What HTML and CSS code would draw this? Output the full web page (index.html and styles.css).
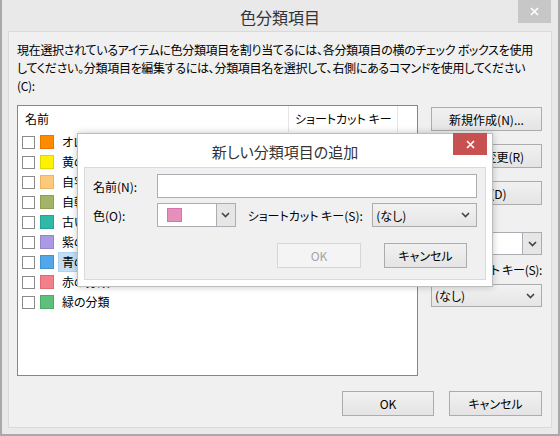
FILE: index.html
```html
<!DOCTYPE html>
<html lang="ja">
<head>
  <meta charset="UTF-8">
  <title>色分類項目</title>
  <link rel="stylesheet" href="styles.css">
</head>
<body>

  <div class="window">
    <div class="titlebar">
      <span class="title">色分類項目</span>
      <button class="close-btn" aria-label="閉じる">
        <svg width="9" height="9" viewBox="0 0 9 9"><path d="M1 1 L8 8 M8 1 L1 8" stroke="#fff" stroke-width="1.6" fill="none"/></svg>
      </button>
    </div>

    <div class="client">
      <p class="intro">
        <span>現在選択されているアイテムに色分類項目を割り当てるには、各分類項目の横のチェック ボックスを使用</span>
        <span>してください。分類項目を編集するには、分類項目名を選択して、右側にあるコマンドを使用してください</span>
        <span>(C):</span>
      </p>

      <div class="main">
        <div class="listbox">
          <div class="list-head">
            <div class="col-name">名前</div>
            <div class="col-key">ショートカット キー</div>
          </div>
          <ul class="list">
            <li><span class="check"></span><span class="swatch sw-orange"></span><span class="name">オレンジの分類</span></li>
            <li><span class="check"></span><span class="swatch sw-yellow"></span><span class="name">黄の分類</span></li>
            <li><span class="check"></span><span class="swatch sw-peach"></span><span class="name">自宅</span></li>
            <li><span class="check"></span><span class="swatch sw-olive"></span><span class="name">自転車</span></li>
            <li><span class="check"></span><span class="swatch sw-teal"></span><span class="name">古い項目</span></li>
            <li><span class="check"></span><span class="swatch sw-purple"></span><span class="name">紫の分類</span></li>
            <li><span class="check"></span><span class="swatch sw-blue"></span><span class="name selected">青の分類</span></li>
            <li><span class="check"></span><span class="swatch sw-red"></span><span class="name">赤の分類</span></li>
            <li><span class="check"></span><span class="swatch sw-green"></span><span class="name">緑の分類</span></li>
          </ul>
        </div>

        <div class="side">
          <button class="btn side-btn">新規作成(N)...</button>
          <button class="btn side-btn">名前の変更(R)</button>
          <button class="btn side-btn">削除(D)</button>
          <div class="side-label">色(O):</div>
          <div class="combo side-combo">
            <span class="combo-value"></span>
            <span class="combo-arrow">
              <svg width="9" height="6" viewBox="0 0 9 6"><path d="M1 1 L4.5 4.5 L8 1" stroke="#444" stroke-width="1.6" fill="none"/></svg>
            </span>
          </div>
          <div class="side-label key-label">ショートカット キー(S):</div>
          <div class="select side-select">
            <span>(なし)</span>
            <svg width="9" height="6" viewBox="0 0 9 6"><path d="M1 1 L4.5 4.5 L8 1" stroke="#444" stroke-width="1.6" fill="none"/></svg>
          </div>
        </div>
      </div>

      <div class="footer">
        <button class="btn footer-btn">OK</button>
        <button class="btn footer-btn">キャンセル</button>
      </div>
    </div>

    <!-- 新しい分類項目の追加 -->
    <div class="modal">
      <div class="modal-titlebar">
        <span class="modal-title">新しい分類項目の追加</span>
        <button class="modal-close" aria-label="閉じる">
          <svg width="9" height="9" viewBox="0 0 9 9"><path d="M1 1 L8 8 M8 1 L1 8" stroke="#fff" stroke-width="1.6" fill="none"/></svg>
        </button>
      </div>
      <div class="modal-client">
        <div class="mrow">
          <label class="mlabel">名前(N):</label>
          <div class="text-input"></div>
        </div>
        <div class="mrow mrow-color">
          <label class="mlabel">色(O):</label>
          <div class="combo color-combo">
            <span class="combo-value"><span class="pink-chip"></span></span>
            <span class="combo-arrow">
              <svg width="9" height="6" viewBox="0 0 9 6"><path d="M1 1 L4.5 4.5 L8 1" stroke="#444" stroke-width="1.6" fill="none"/></svg>
            </span>
          </div>
          <label class="mlabel-key">ショートカット キー(S):</label>
          <div class="select modal-select">
            <span>(なし)</span>
            <svg width="9" height="6" viewBox="0 0 9 6"><path d="M1 1 L4.5 4.5 L8 1" stroke="#444" stroke-width="1.6" fill="none"/></svg>
          </div>
        </div>
        <div class="mbuttons">
          <button class="btn mbtn" disabled>OK</button>
          <button class="btn mbtn mbtn-cancel">キャンセル</button>
        </div>
      </div>
    </div>
  </div>

</body>
</html>
```

FILE: styles.css
```css
* {
  box-sizing: border-box;
}

body {
  margin: 0;
  background: #fff;
  color: #000;
  font-family: "Noto Sans CJK JP", "Noto Sans", sans-serif;
  font-size: 12px;
  font-feature-settings: "palt";
}

.window {
  position: relative;
  width: 560px;
  height: 436px;
  background: #e9e9e9;
  border: 2px solid #a9a9a9;
  border-top: 0;
  padding: 0 6px 6px;
  display: flex;
  flex-direction: column;
}

.titlebar {
  position: relative;
  height: 31px;
  display: flex;
  align-items: center;
  justify-content: center;
  padding-top: 3px;
}

.title {
  font-size: 16px;
  color: #333;
}

.close-btn {
  position: absolute;
  top: 0;
  right: 1px;
  width: 33px;
  height: 23px;
  border: 0;
  padding: 0;
  background: #c7c7c7;
  display: flex;
  align-items: center;
  justify-content: center;
}

.client {
  flex: 1;
  border: 1px solid #dadada;
  background: #f0f0f0;
  padding: 9px 9px 0 8px;
}

.intro {
  margin: 0;
  line-height: 18px;
  letter-spacing: -0.3px;
}

.intro span {
  display: block;
  white-space: nowrap;
}

.main {
  display: flex;
  gap: 13px;
  margin-top: 10px;
  height: 271px;
}

.listbox {
  width: 401px;
  border: 1px solid #828790;
  background: #fff;
  overflow: hidden;
}

.list-head {
  display: flex;
  height: 26px;
  line-height: 26px;
}

.col-name {
  width: 270px;
  padding-left: 7px;
}

.col-key {
  width: 110px;
  padding-left: 6px;
  border-left: 1px solid #e5e5e5;
  border-right: 1px solid #e5e5e5;
  white-space: nowrap;
}

.list {
  list-style: none;
  margin: 0;
  padding: 0;
}

.list li {
  display: flex;
  align-items: center;
  height: 20px;
  padding-left: 4px;
}

.check {
  width: 13px;
  height: 13px;
  border: 1px solid #8a8a8a;
  background: #fff;
  margin-right: 5px;
}

.swatch {
  width: 14px;
  height: 14px;
  margin-right: 5px;
  border: 1px solid;
}

.sw-orange { background: #ff8a00; border-color: #e37a00; }
.sw-yellow { background: #fff200; border-color: #e3d500; }
.sw-peach { background: #fec97a; border-color: #eab466; }
.sw-olive { background: #a2b466; border-color: #8ea052; }
.sw-teal { background: #30b8a8; border-color: #22a394; }
.sw-purple { background: #a99ae2; border-color: #9585d0; }
.sw-blue { background: #52a7e8; border-color: #3f92d4; }
.sw-red { background: #f2808a; border-color: #de6c77; }
.sw-green { background: #5fbf7c; border-color: #4aab68; }

.name {
  padding: 0 3px;
  line-height: 18px;
  border: 1px solid transparent;
  margin-left: -1px;
}

.name.selected {
  background: #c4dff5;
  border-color: #b0d2ef;
}

.btn {
  font-family: inherit;
  font-size: 12px;
  font-feature-settings: "palt";
  color: #000;
  border: 1px solid #acacac;
  background: linear-gradient(#f1f1f1, #e4e4e4);
  padding: 0;
  white-space: nowrap;
}

.side {
  width: 111px;
  display: flex;
  flex-direction: column;
  padding-top: 2px;
}

.side-btn {
  height: 24px;
  margin-bottom: 13px;
}

.side-label {
  height: 16px;
  line-height: 16px;
  margin-top: -6px;
  white-space: nowrap;
  letter-spacing: -0.3px;
}

.key-label {
  margin-top: 5px;
  margin-bottom: 0;
  height: 20px;
  line-height: 20px;
}

.combo {
  display: flex;
  border: 1px solid #abadb3;
  background: #fff;
}

.combo-value {
  flex: 1;
  display: flex;
  align-items: center;
}

.combo-arrow {
  width: 19px;
  display: flex;
  align-items: center;
  justify-content: center;
  background: #e6e6e6;
  border-left: 1px solid #abadb3;
}

.side-combo {
  height: 23px;
  margin-top: 4px;
}

.select {
  display: flex;
  align-items: center;
  justify-content: space-between;
  border: 1px solid #acacac;
  background: linear-gradient(#f2f2f2, #e5e5e5);
  padding: 0 6px 0 3px;
}

.side-select {
  height: 23px;
  margin-top: 4px;
}

.footer {
  display: flex;
  justify-content: flex-end;
  gap: 15px;
  margin-top: 15px;
}

.footer-btn {
  width: 92px;
  height: 25px;
}

.footer-btn + .footer-btn {
  width: 93px;
}

/* 新しい分類項目の追加 */
.modal {
  position: absolute;
  left: 75px;
  top: 133px;
  width: 416px;
  height: 154px;
  background: #fff;
  border: 1px solid #bdbdbd;
  box-shadow: 0 0 7px rgba(0, 0, 0, 0.22);
  padding: 0 6px 6px;
  display: flex;
  flex-direction: column;
}

.modal-titlebar {
  position: relative;
  height: 33px;
  display: flex;
  align-items: center;
  justify-content: center;
  padding-top: 2px;
}

.modal-title {
  font-size: 15px;
  color: #333;
}

.modal-close {
  position: absolute;
  top: -1px;
  right: -1px;
  width: 34px;
  height: 22px;
  border: 0;
  padding: 0;
  background: #c75050;
  display: flex;
  align-items: center;
  justify-content: center;
}

.modal-client {
  flex: 1;
  border: 1px solid #dadada;
  background: #f0f0f0;
  padding: 6px 8px 0 8px;
}

.mrow {
  display: flex;
  align-items: center;
}

.mrow-color {
  margin-top: 5px;
}

.mlabel {
  width: 64px;
}

.text-input {
  width: 320px;
  height: 24px;
  border: 1px solid #abadb3;
  background: #fff;
}

.color-combo {
  width: 79px;
  height: 24px;
}

.color-combo .combo-value {
  padding-left: 9px;
}

.pink-chip {
  width: 15px;
  height: 14px;
  background: #e68fbd;
  border: 1px solid #d775a9;
}

.mlabel-key {
  width: 125px;
  margin-left: 12px;
  white-space: nowrap;
}

.modal-select {
  width: 105px;
  height: 24px;
}

.mbuttons {
  display: flex;
  justify-content: flex-end;
  gap: 23px;
  margin-top: 16px;
  padding-right: 10px;
}

.mbtn {
  width: 84px;
  height: 25px;
}

.mbtn-cancel {
  width: 83px;
}

.mbtn:disabled {
  color: #a3a3a3;
  border-color: #d6d6d6;
  background: #f4f4f4;
}
```
